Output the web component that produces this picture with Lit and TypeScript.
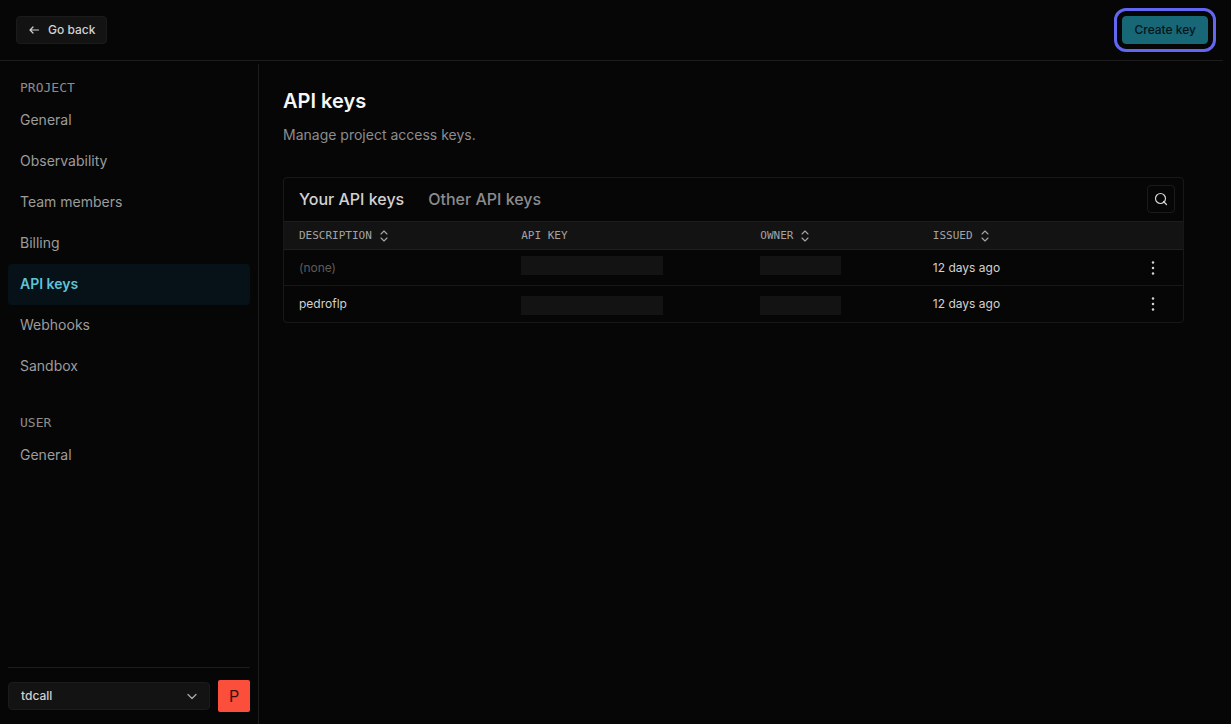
import { LitElement, html, css, svg } from "lit";
import { customElement, state } from "lit/decorators.js";

interface KeyRow {
  description: string;
  issued: string;
}

const PROJECT_LINKS = ["General", "Observability", "Team members", "Billing", "API keys", "Webhooks", "Sandbox"];
const USER_LINKS = ["General"];
const KEYS: KeyRow[] = [
  { description: "", issued: "12 days ago" },
  { description: "pedroflp", issued: "12 days ago" },
];

const stroke = (d: unknown, w: number, h: number) => html`<svg
  width=${w} height=${h} viewBox="0 0 ${w} ${h}" fill="none" stroke="currentColor"
  stroke-linecap="round" stroke-linejoin="round" aria-hidden="true">${d}</svg>`;

const arrowLeft = stroke(svg`<path stroke-width="1.2" d="M10.5 6H2M5 3 2 6l3 3"/>`, 12, 12);
const chevronDown = stroke(svg`<path stroke-width="1.3" d="M2 4.5 6 8.500 10 4.500"/>`, 12, 12);
const sortArrows = stroke(svg`<path stroke-width="1.1" d="M2 4 5 1l3 3M2 8l3 3 3-3"/>`, 10, 12);
const searchIcon = stroke(svg`<circle cx="6.5" cy="6.5" r="5" stroke-width="1.2"/><path stroke-width="1.2" d="m9.500 9.500 3 3"/>`, 14, 14);
const dots = html`<svg width="4" height="14" viewBox="0 0 4 14" fill="currentColor" aria-hidden="true">
  <circle cx="2" cy="1.5" r="1.25"/><circle cx="2" cy="7" r="1.25"/><circle cx="2" cy="12.5" r="1.25"/></svg>`;

@customElement("app-root")
export class AppRoot extends LitElement {
  @state() private tab = 0;

  static styles = css`
    :host {
      display: flex;
      flex-direction: column;
      min-height: 100vh;
      box-sizing: border-box;
      padding-right: 8px;
      background: #060606;
      color: #d2d2d2;
      font-family: Inter, "Liberation Sans", sans-serif;
      font-size: 12px;
      line-height: 20px;
    }
    * { box-sizing: border-box; }
    svg { display: block; flex: none; }
    button, select { font: inherit; color: inherit; margin: 0; }
    button { cursor: pointer; }

    .topbar {
      display: flex;
      justify-content: space-between;
      align-items: center;
      padding: 16px 15px 16px 16px;
      border-bottom: 1px solid #1c1c1c;
    }
    .btn {
      display: flex;
      align-items: center;
      height: 28px;
      gap: 8px;
      padding: 0 11px;
      border: 1px solid #1b1b1b;
      border-radius: 4px;
      background: #131313;
      font-weight: 500;
    }
    .primary {
      border-color: #176777;
      background: #176777;
      color: #06151a;
      outline: 3px solid #6366f1;
      outline-offset: 5px;
    }

    .body { display: flex; flex: 1; padding-top: 3px; }
    .sidebar {
      display: flex;
      flex-direction: column;
      width: 259px;
      flex: none;
      padding: 14px 8px 12px;
      border-right: 1px solid #1c1c1c;
    }
    .group {
      margin: 0;
      padding: 0 12px;
      font: 400 13px/20px "DejaVu Sans Mono", monospace;
      color: #8c8c8c;
    }
    .group + .links { margin-bottom: 26px; }
    .links { margin: 0; padding: 2px 0 0; list-style: none; }
    .link {
      display: block;
      padding: 10px 12px 11px;
      border-radius: 4px;
      font-size: 14px;
      color: #9c9c9c;
      text-decoration: none;
    }
    .active { background: #061118; color: #5fc3d8; font-weight: 600; }
    .account {
      display: flex;
      align-items: center;
      gap: 8px;
      margin-top: auto;
      padding-top: 12px;
      border-top: 1px solid #1c1c1c;
    }
    .picker { display: grid; flex: 1; align-items: center; color: #a8a8a8; }
    .picker select, .picker svg { grid-area: 1 / 1; }
    .picker svg { justify-self: end; margin-right: 12px; pointer-events: none; }
    .picker select {
      appearance: none;
      height: 28px;
      padding: 0 12px;
      border: 1px solid #1b1b1b;
      border-radius: 4px;
      background: #131313;
      color: #d2d2d2;
      font-weight: 500;
    }
    .avatar {
      width: 32px;
      height: 32px;
      padding: 0;
      border: 0;
      border-radius: 2px;
      background: #fb4e3b;
      color: #35100c;
      font-size: 16px;
    }

    .main { flex: 1; min-width: 0; padding: 25px 39px 24px 24px; }
    .title { margin: 0; font-size: 20px; line-height: 24px; font-weight: 600; color: #f6f6f6; }
    .lead { margin: 12px 0 32px; font-size: 14px; color: #8c8c8c; }
    .card { border: 1px solid #181818; border-radius: 4px; overflow: hidden; }
    .cardhead { display: flex; align-items: center; gap: 24px; padding: 7px 8px 8px 15px; }
    .tab {
      padding: 0;
      border: 0;
      background: none;
      font-size: 16px;
      line-height: 24px;
      font-weight: 500;
      color: #8c8c8c;
    }
    .current { color: #d2d2d2; }
    .search {
      display: grid;
      place-items: center;
      width: 28px;
      height: 28px;
      margin-left: auto;
      padding: 0;
      border: 1px solid #1b1b1b;
      border-radius: 4px;
      background: none;
    }
    .table { width: 100%; border-collapse: separate; border-spacing: 0; table-layout: fixed; }
    .c1 { width: 24.6%; }
    .c2 { width: 26.6%; }
    .c3 { width: 19.2%; }
    .c5 { width: 46px; }
    .table th {
      height: 29px;
      padding: 0 0 0 16px;
      border-top: 1px solid #1c1c1c;
      border-bottom: 1px solid #1f1f1f;
      background: #131313;
      text-align: left;
      font: 400 11px/16px "DejaVu Sans Mono", monospace;
      color: #a4a4a4;
    }
    .sort {
      display: flex;
      align-items: center;
      gap: 7px;
      padding: 0;
      border: 0;
      background: none;
    }
    .table td { height: 36px; padding: 0 0 0 16px; border-bottom: 1px solid #181818; }
    .table th:first-child, .table td:first-child { padding-left: 15px; }
    .table tbody tr:last-child td { border-bottom: 0; }
    .none { color: #5c5c5c; }
    .table .hidden { vertical-align: top; padding-top: 6px; }
    .table tr + tr .hidden { padding-top: 10px; }
    .bar { display: block; height: 19px; background: #131313; }
    .key { width: 142px; }
    .owner { width: 81px; }
    .table .menucell { padding: 0; }
    .menu {
      display: grid;
      place-items: center;
      width: 32px;
      height: 28px;
      padding: 0;
      border: 0;
      background: none;
    }
  `;

  private link(label: string) {
    const active = label === "API keys";
    return html`<li><a class="link ${active ? "active" : ""}" href="#" aria-current=${active ? "page" : "false"}>${label}</a></li>`;
  }

  private sortable(label: string) {
    return html`<th scope="col"><button class="sort">${label}${sortArrows}</button></th>`;
  }

  render() {
    return html`
      <header class="topbar">
        <button class="btn">${arrowLeft}Go back</button>
        <button class="btn primary">Create key</button>
      </header>
      <div class="body">
        <nav class="sidebar" aria-label="Settings">
          <h2 class="group">PROJECT</h2>
          <ul class="links">${PROJECT_LINKS.map((l) => this.link(l))}</ul>
          <h2 class="group">USER</h2>
          <ul class="links">${USER_LINKS.map((l) => this.link(l))}</ul>
          <div class="account">
            <label class="picker">
              <select aria-label="Project"><option>tdcall</option></select>
              ${chevronDown}
            </label>
            <button class="avatar" aria-label="Account">P</button>
          </div>
        </nav>
        <main class="main">
          <h1 class="title">API keys</h1>
          <p class="lead">Manage project access keys.</p>
          <section class="card">
            <div class="cardhead">
              ${["Your API keys", "Other API keys"].map(
                (t, i) => html`<button class="tab ${this.tab === i ? "current" : ""}" @click=${() => (this.tab = i)}>${t}</button>`
              )}
              <button class="search" aria-label="Search">${searchIcon}</button>
            </div>
            <table class="table">
              <colgroup><col class="c1"><col class="c2"><col class="c3"><col><col class="c5"></colgroup>
              <thead>
                <tr>
                  ${this.sortable("DESCRIPTION")}
                  <th scope="col">API KEY</th>
                  ${this.sortable("OWNER")}
                  ${this.sortable("ISSUED")}
                  <th></th>
                </tr>
              </thead>
              <tbody>
                ${KEYS.map(
                  (k) => html`<tr>
                    <td>${k.description || html`<span class="none">(none)</span>`}</td>
                    <td class="hidden"><span class="bar key"></span></td>
                    <td class="hidden"><span class="bar owner"></span></td>
                    <td>${k.issued}</td>
                    <td class="menucell"><button class="menu" aria-label="Key actions">${dots}</button></td>
                  </tr>`
                )}
              </tbody>
            </table>
          </section>
        </main>
      </div>
    `;
  }
}
